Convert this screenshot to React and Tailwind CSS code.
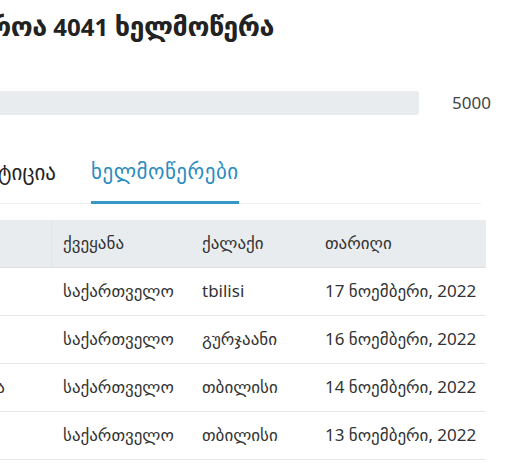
import React from "react";

const rows = [
  { name: "", country: "საქართველო", city: "tbilisi", date: "17 ნოემბერი, 2022" },
  { name: "", country: "საქართველო", city: "გურჯაანი", date: "16 ნოემბერი, 2022" },
  { name: "ნინო ხელაძა", country: "საქართველო", city: "თბილისი", date: "14 ნოემბერი, 2022" },
  { name: "", country: "საქართველო", city: "თბილისი", date: "13 ნოემბერი, 2022" },
];

const App = () => {
  return (
    <div
      className="w-[515px] h-[469px] overflow-hidden bg-white text-[#333]"
      style={{ fontFamily: '"Noto Sans", "DejaVu Sans", sans-serif' }}
    >
      {/* Title, cut on the left */}
      <div className="flex justify-end w-[274px] overflow-hidden pt-[6px]">
        <h1 className="whitespace-nowrap text-[27px] font-bold text-[#222] leading-[40px] tracking-[-0.5px]">
          სულ მოგროა <span className="text-[24px] tracking-normal">4041</span> ხელმოწერა
        </h1>
      </div>

      {/* Progress */}
      <div className="flex items-center mt-[43px]">
        <div className="w-[419px] h-[24px] bg-[#e9ecef] rounded-r-[3px]" />
        <span className="ml-[33px] text-[17px] text-[#444]">5000</span>
      </div>

      {/* Tabs */}
      <div className="flex w-[481px] border-b border-[#eef0f2] mt-[31px]">
        <div className="flex justify-end w-[56px] overflow-hidden">
          <span className="whitespace-nowrap text-[21px] leading-[50px] pb-[6px] text-[#222]">პეტიცია</span>
        </div>
        <div className="ml-[35px] border-b-[3px] border-[#3597c4] -mb-px">
          <span className="block whitespace-nowrap text-[21px] leading-[48px] pb-[6px] text-[#2a8cbf] tracking-[0.5px]">
            ხელმოწერები
          </span>
        </div>
      </div>

      {/* Table */}
      <div className="w-[486px] mt-[16px] text-[17px]">
        <div className="grid grid-cols-[52px_139px_123px_172px] bg-[#e9ecef] h-[48px] items-center border-b border-[#dee2e6] text-[#333]">
          <div className="h-full border-r border-[#e2e5e8]" />
          <div className="pl-[11px]">ქვეყანა</div>
          <div className="pl-[11px]">ქალაქი</div>
          <div className="pl-[11px]">თარიღი</div>
        </div>
        {rows.map((r, i) => (
          <div
            key={i}
            className="grid grid-cols-[52px_139px_123px_172px] h-[48px] items-center border-b border-[#e5e7e9]"
          >
            <div className="flex justify-end overflow-hidden pr-[47px] whitespace-nowrap">{r.name}</div>
            <div className="pl-[11px] whitespace-nowrap">{r.country}</div>
            <div className="pl-[11px] whitespace-nowrap">{r.city}</div>
            <div className="pl-[11px] whitespace-nowrap">{r.date}</div>
          </div>
        ))}
      </div>
    </div>
  );
};

export default App;
